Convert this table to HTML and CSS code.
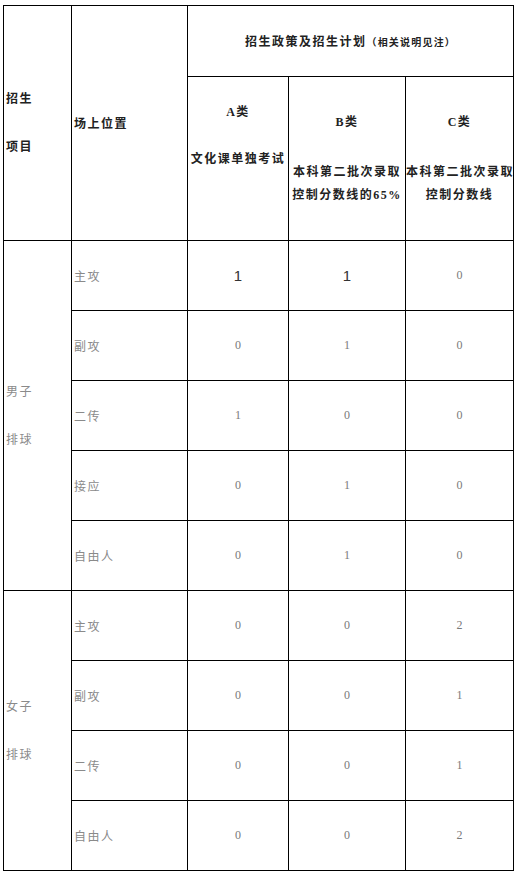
FILE: index.html
```html
<!DOCTYPE html>
<html lang="zh">
<head>
<meta charset="utf-8">
<link rel="stylesheet" href="styles.css">
</head>
<body>
<div class="page">
<table class="plan">
  <colgroup>
    <col class="c1"><col class="c2"><col class="c3"><col class="c4"><col class="c5">
  </colgroup>
  <tr class="r-top">
    <td rowspan="2" class="h left"><p class="two">招生<br>项目</p></td>
    <td rowspan="2" class="h left">场上位置</td>
    <td colspan="3" class="h title">招生政策及招生计划<span class="note">（相关说明见注）</span></td>
  </tr>
  <tr class="r-cat">
    <td class="h cat cat-a"><p class="kind">A类</p><p class="desc">文化课单独考试</p></td>
    <td class="h cat cat-b"><p class="kind">B类</p><p class="desc">本科第二批次录取<br>控制分数线的65%</p></td>
    <td class="h cat cat-b"><p class="kind">C类</p><p class="desc">本科第二批次录取<br>控制分数线</p></td>
  </tr>
  <tr>
    <td rowspan="5" class="b left"><p class="two">男子<br>排球</p></td>
    <td class="b left">主攻</td><td class="n big">1</td><td class="n big">1</td><td class="n">0</td>
  </tr>
  <tr><td class="b left">副攻</td><td class="n">0</td><td class="n">1</td><td class="n">0</td></tr>
  <tr><td class="b left">二传</td><td class="n">1</td><td class="n">0</td><td class="n">0</td></tr>
  <tr><td class="b left">接应</td><td class="n">0</td><td class="n">1</td><td class="n">0</td></tr>
  <tr><td class="b left">自由人</td><td class="n">0</td><td class="n">1</td><td class="n">0</td></tr>
  <tr>
    <td rowspan="4" class="b left"><p class="two">女子<br>排球</p></td>
    <td class="b left">主攻</td><td class="n">0</td><td class="n">0</td><td class="n">2</td>
  </tr>
  <tr><td class="b left">副攻</td><td class="n">0</td><td class="n">0</td><td class="n">1</td></tr>
  <tr><td class="b left">二传</td><td class="n">0</td><td class="n">0</td><td class="n">1</td></tr>
  <tr><td class="b left">自由人</td><td class="n">0</td><td class="n">0</td><td class="n">2</td></tr>
</table>
</div>
</body>
</html>
```

FILE: styles.css
```css
html, body {
  margin: 0;
  padding: 0;
  background: #ffffff;
}
.page {
  padding: 5px 0 0 3px;
}
.plan {
  border-collapse: collapse;
  table-layout: fixed;
  width: 511px;
  font-family: "Liberation Serif", "Noto Sans CJK SC", serif;
}
.plan td {
  border: 1px solid #000;
  padding: 0;
  vertical-align: middle;
  text-align: center;
}
.c1 { width: 68px; }
.c2 { width: 116px; }
.c3 { width: 101px; }
.c4 { width: 117px; }
.c5 { width: 108px; }
.r-top td { height: 70px; }
.r-cat td { height: 163px; }
.plan p { margin: 0; }
.two { line-height: 48px; }
.h {
  font-size: 12px;
  font-weight: 700;
  color: #222;
  letter-spacing: 1.5px;
}
.left {
  text-align: left !important;
  padding-left: 2px !important;
}
.title .note {
  font-size: 10px;
  letter-spacing: 1.2px;
}
.cat {
  vertical-align: top !important;
  line-height: 23px;
  white-space: nowrap;
}
.cat-a .kind { margin-top: 24px; }
.cat-a .desc { margin-top: 24px; }
.cat-b .kind { margin-top: 34px; }
.cat-b .desc { margin-top: 27px; }
.b {
  height: 69px;
  font-size: 12px;
  color: #8a8a8a;
  letter-spacing: 1.5px;
}
.n {
  font-size: 12px;
  color: #7a7a7a;
}
.n.big {
  font-family: "Liberation Sans", sans-serif;
  font-size: 15px;
  color: #333;
}
```
